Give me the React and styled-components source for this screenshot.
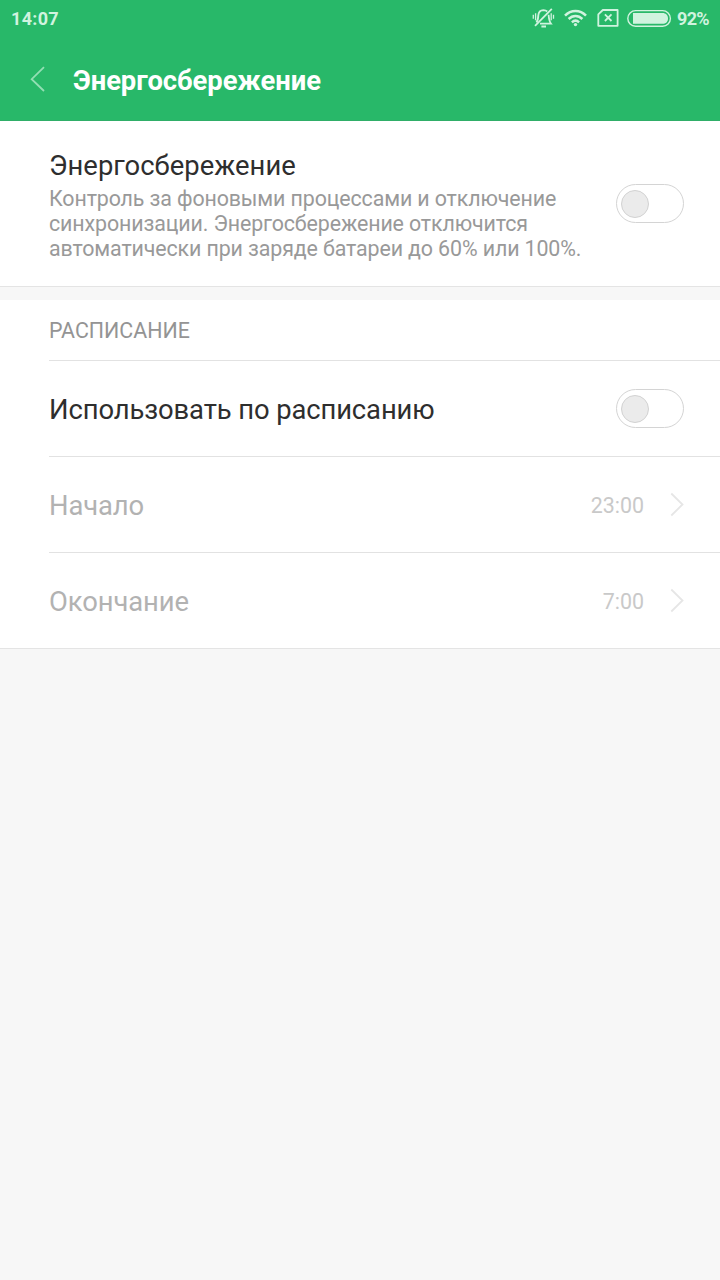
import React from "react";
import styled, { createGlobalStyle } from "styled-components";

const GlobalStyle = createGlobalStyle`
  * { box-sizing: border-box; }
  body {
    margin: 0;
    background: #f7f7f7;
    font-family: Roboto, "Liberation Sans", sans-serif;
  }
`;

const Screen = styled.div`
  width: 720px;
  min-height: 1280px;
  background: #f7f7f7;
`;

const Header = styled.header`
  height: 121px;
  background: #28b869;
  border-bottom: 1px solid #2fae68;
`;

const StatusBar = styled.div`
  display: flex;
  align-items: center;
  justify-content: space-between;
  height: 37px;
  padding: 0 11px;
  color: #d0f3df;
  font-size: 18px;
  font-weight: 700;
  line-height: 37px;
`;

const Clock = styled.span`
  letter-spacing: 0.3px;
`;

const StatusIcons = styled.div`
  display: flex;
  align-items: center;
`;

const BatteryLevel = styled.span`
  width: 32px;
  letter-spacing: -0.7px;
`;

const StatusGlyphs = styled.svg`
  display: block;
  width: 146px;
  height: 37px;
`;

const TitleBar = styled.div`
  display: flex;
  align-items: center;
  height: 84px;
  padding-left: 30px;
`;

const BackIcon = styled.svg`
  width: 16px;
  height: 26px;
  margin-right: 27px;
`;

const Title = styled.h1`
  margin: 4px 0 0;
  color: #fff;
  font-size: 27.4px;
  font-weight: 700;
  line-height: 36px;
  letter-spacing: -0.06px;
`;

const Panel = styled.section`
  background: #fff;
  border-bottom: 1px solid #e4e4e4;
  margin-bottom: ${(p) => p.$gap || 0}px;
`;

const Row = styled.div`
  display: flex;
  align-items: center;
  justify-content: space-between;
  height: ${(p) => p.$height}px;
  margin-left: 49px;
  padding-right: 36px;
  border-top: ${(p) => (p.$divided ? "1px solid #e2e2e2" : "none")};
`;

const Label = styled.div`
  padding-top: 2px;
  color: ${(p) => (p.$disabled ? "#b2b2b2" : "#2e2e2e")};
  font-size: 27.4px;
  line-height: 34px;
  letter-spacing: ${(p) => (p.$heading ? "0.03px" : "-0.1px")};
`;

const Description = styled.p`
  margin: 3px 0 -1px;
  color: #999;
  font-size: 21.4px;
  line-height: 25px;
  letter-spacing: -0.12px;
  white-space: pre-line;
`;

const SettingText = styled.div`
  display: flex;
  flex-direction: column;
`;

const SectionTitle = styled.h2`
  margin: 0;
  padding: 18px 0 16px 49px;
  color: #949494;
  font-size: 21.4px;
  font-weight: 400;
  line-height: 26px;
`;

const Switch = styled.div`
  display: flex;
  align-items: center;
  flex: none;
  width: 68px;
  height: 39px;
  padding-left: 4px;
  border: 1px solid #d4d4d4;
  border-radius: 20px;
`;

const Knob = styled.span`
  width: 28px;
  height: 28px;
  border: 1px solid #d2d2d2;
  border-radius: 50%;
  background: #ebebeb;
`;

const Value = styled.div`
  display: flex;
  align-items: center;
  gap: 26px;
  color: #c9c9c9;
  font-size: 21.4px;
  line-height: 28px;
`;

const Time = styled.span`
  padding-top: 2px;
`;

const Chevron = styled.svg`
  width: 14px;
  height: 26px;
`;

function Toggle() {
  return (
    <Switch role="switch" aria-checked="false">
      <Knob />
    </Switch>
  );
}

function TimeRow({ label, time }) {
  return (
    <Row $height={96} $divided>
      <Label $disabled>{label}</Label>
      <Value>
        <Time>{time}</Time>
        <Chevron viewBox="0 0 14 26" fill="none" stroke="#e6e6e6" strokeWidth="1.8">
          <path d="M1.3 1.5L12.5 12.5L1.3 23.5" />
        </Chevron>
      </Value>
    </Row>
  );
}

function StatusIconSet() {
  return (
    <StatusGlyphs viewBox="531 0 146 37" fill="none" stroke="#d0f3df" strokeWidth="1.8">
      <path d="M536.4 22.4C538.1 20.5 538.2 18.5 538.3 15.4C538.6 12 540.5 10.2 543.4 10.1C545 10.1 546.2 10.5 547.2 11.5M548.6 14.8C548.8 18.6 549 21 551 23.7H540M541.4 26.5H546" />
      <path d="M551.8 8.8L535 25.8" />
      <path d="M535.6 13.2V20.2M533.3 14.8V18.8M551.2 13.2V20.2M553.5 14.8V18.8" strokeWidth="1.3" />
      <g strokeWidth="2.5">
        <path d="M565 15.6C571 9.4 580 9.4 586 15.6" />
        <path d="M568.6 19C572.7 15 578.3 15 582.4 19" />
        <path d="M571.9 22.3C574.2 20.2 576.8 20.2 579.1 22.3" />
      </g>
      <circle cx="575.5" cy="24.6" r="1.7" fill="#d0f3df" stroke="none" />
      <path d="M602.8 10H617.6V25.8H598.3V14.4Z" strokeLinejoin="round" />
      <path d="M604.9 14.4L611.5 21M611.5 14.4L604.9 21" />
      <rect x="627.8" y="10.6" width="42.6" height="15.6" rx="7.8" strokeWidth="1.4" />
      <path d="M633 13H662.5C665.8 13 668 15.2 668 18.4S665.8 23.8 662.5 23.8H633Z" fill="#d0f3df" stroke="none" />
    </StatusGlyphs>
  );
}

export default function App() {
  return (
    <>
      <GlobalStyle />
      <Screen>
        <Header>
          <StatusBar>
            <Clock>14:07</Clock>
            <StatusIcons>
              <StatusIconSet />
              <BatteryLevel>92%</BatteryLevel>
            </StatusIcons>
          </StatusBar>
          <TitleBar>
            <BackIcon viewBox="0 0 16 26" fill="none" stroke="#93dfb4" strokeWidth="1.8">
              <path d="M14 1.2L1.7 13.2L14 25" />
            </BackIcon>
            <Title>Энергосбережение</Title>
          </TitleBar>
        </Header>
        <Panel $gap={13}>
          <Row $height={165}>
            <SettingText>
              <Label $heading>Энергосбережение</Label>
              <Description>
                {"Контроль за фоновыми процессами и отключение\nсинхронизации. Энергосбережение отключится\nавтоматически при заряде батареи до 60% или 100%."}
              </Description>
            </SettingText>
            <Toggle />
          </Row>
        </Panel>
        <Panel>
          <SectionTitle>РАСПИСАНИЕ</SectionTitle>
          <Row $height={96} $divided>
            <Label>Использовать по расписанию</Label>
            <Toggle />
          </Row>
          <TimeRow label="Начало" time="23:00" />
          <TimeRow label="Окончание" time="7:00" />
        </Panel>
      </Screen>
    </>
  );
}
